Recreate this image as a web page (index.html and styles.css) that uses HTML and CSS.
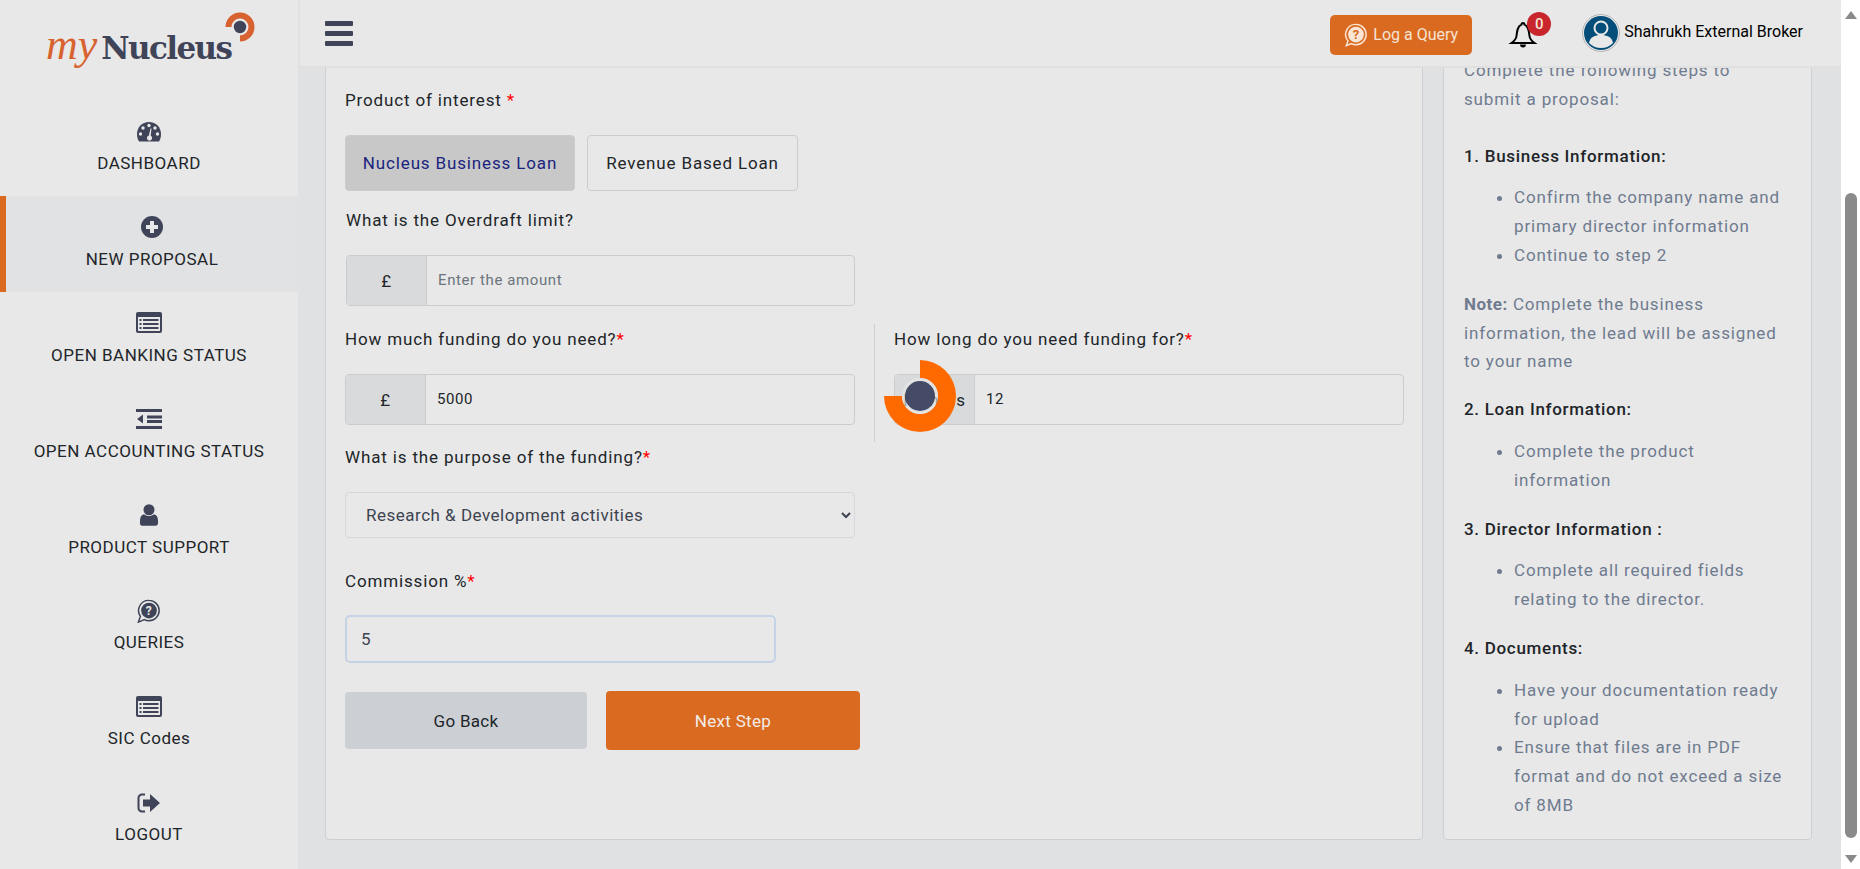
FILE: index.html
```html
<!DOCTYPE html>
<html lang="en">
<head>
<meta charset="utf-8">
<title>myNucleus - New Proposal</title>
<link rel="stylesheet" href="styles.css">
</head>
<body>
<div class="app">
  <aside class="sidebar">
    <div class="logo">
      <span class="logo-my">my</span><span class="logo-nucleus">Nucleus</span>
      <svg class="logo-mark" width="30" height="30" viewBox="0 0 30 30"><path d="M.5 15A14.500 14.500 0 1 1 15 29.500V23.500A8.500 8.500 0 1 0 6.500 15Z" fill="#d8622f"/><circle cx="15" cy="15" r="6.200" fill="#3f4458"/></svg>
    </div>
    <nav class="nav">
      <a class="nav-item">
        <svg class="nav-icon" width="26" height="22" viewBox="0 0 26 22"><path d="M13 1C6 1 1 6.500 1 13c0 3 .8 5.500 2 7.500h20c1.200-2 2-4.500 2-7.500C25 6.500 20 1 13 1Z" fill="#3f4458"/><g fill="#e8e8e8"><circle cx="13" cy="4.500" r="1.700"/><circle cx="7" cy="7" r="1.700"/><circle cx="19" cy="7" r="1.700"/><circle cx="4.500" cy="13" r="1.700"/><circle cx="21.500" cy="13" r="1.700"/><path d="M14.500 7.500h1l-.8 7.200a2.600 2.600 0 1 1-1.800-.2Z"/></g></svg>
        <span>DASHBOARD</span>
      </a>
      <a class="nav-item active">
        <svg class="nav-icon" width="22" height="22" viewBox="0 0 22 22"><circle cx="11" cy="11" r="11" fill="#3f4458"/><path d="M9 5h4v4h4v4h-4v4H9v-4H5V9h4Z" fill="#e8e8e8"/></svg>
        <span>NEW PROPOSAL</span>
      </a>
      <a class="nav-item">
        <svg class="nav-icon" width="26" height="22" viewBox="0 0 26 22"><use href="#listalt"/></svg>
        <span>OPEN BANKING STATUS</span>
      </a>
      <a class="nav-item">
        <svg class="nav-icon" width="26" height="22" viewBox="0 0 26 22"><path d="M0 1h26v3H0ZM11 7.500h15v3H11ZM11 12h15v3H11ZM0 18h26v3H0ZM1 11l6-4.500v9Z" fill="#3f4458"/></svg>
        <span>OPEN ACCOUNTING STATUS</span>
      </a>
      <a class="nav-item">
        <svg class="nav-icon" width="18" height="22" viewBox="0 0 18 22.500"><circle cx="9" cy="6" r="5.500" fill="#3f4458"/><path d="M4 10.500c1.300 1.200 3 1.800 5 1.800s3.700-.6 5-1.800c2.500.4 4 2.600 4 6.500v2.500c0 1.400-1 2.500-2.500 2.500h-13C1 22.500 0 21 0 19.500V17c0-3.900 1.500-6.100 4-6.500Z" fill="#3f4458"/></svg>
        <span>PRODUCT SUPPORT</span>
      </a>
      <a class="nav-item">
        <svg class="nav-icon" width="26" height="26" viewBox="0 0 26 26"><use href="#querybubble"/></svg>
        <span>QUERIES</span>
      </a>
      <a class="nav-item">
        <svg class="nav-icon" width="26" height="22" viewBox="0 0 26 22"><use href="#listalt"/></svg>
        <span>SIC Codes</span>
      </a>
      <a class="nav-item">
        <svg class="nav-icon" width="24" height="20" viewBox="0 0 24 20"><path d="M8 1.500H5A3.500 3.500 0 0 0 1.500 5v10A3.500 3.500 0 0 0 5 18.500h3" fill="none" stroke="#3f4458" stroke-width="2"/><path d="M6 6.500h7V1l10 9-10 9v-5.500H6Z" fill="#3f4458"/></svg>
        <span>LOGOUT</span>
      </a>
    </nav>
  </aside>

  <div class="main">
    <header class="topbar">
      <button class="burger" aria-label="Menu"><i></i><i></i><i></i></button>
      <div class="top-right">
        <button class="query-btn">
          <svg width="24" height="24" viewBox="0 0 26 26"><path d="M13 1.500a11 11 0 0 1 0 22c-2 0-3.500-.5-5-1.200L2.500 24.500l1.800-5A11 11 0 0 1 13 1.500Z" fill="none" stroke="#fbe6d6" stroke-width="1.600"/><circle cx="13" cy="12.500" r="8.500" fill="#fbe6d6"/><text x="13" y="17.500" class="query-mark">?</text></svg>
          <span>Log a Query</span>
        </button>
        <div class="bell">
          <svg width="30" height="30" viewBox="0 0 30 30"><path d="M15 3c-1 0-1.500.8-1.500 1.600C9.500 6 9 11 8.500 16c-.3 2.500-1.500 4.500-5 7h23c-3.500-2.500-4.700-4.500-5-7-.5-5-1-10-5-11.400C16.500 3.800 16 3 15 3Z" fill="none" stroke="#000" stroke-width="2"/><path d="M12 24.500a3 3 0 0 0 6 0Z" fill="#000"/></svg>
          <span class="badge">0</span>
        </div>
        <div class="user">
          <svg width="38" height="38" viewBox="0 0 38 38"><circle cx="19" cy="19" r="18.500" fill="#e8e8e8" stroke="#b5b5b5"/><circle cx="19" cy="19" r="17" fill="#054e7a"/><circle cx="19" cy="14" r="6.500" fill="none" stroke="#e8e8e8" stroke-width="2"/><path d="M7 29c1-6 6-8 12-8s11 2 12 8c-3 3-7 5-12 5S10 32 7 29Z" fill="#e8e8e8"/></svg>
          <span>Shahrukh External Broker</span>
        </div>
      </div>
    </header>

    <div class="content">
      <section class="card form-card">
        <div class="field-label first">Product of interest <em>*</em></div>
        <div class="choices">
          <button class="choice selected">Nucleus Business Loan</button>
          <button class="choice">Revenue Based Loan</button>
        </div>
        <div class="overdraft">
          <div class="field-label od">What is the Overdraft limit?</div>
          <div class="group half">
            <span class="addon">£</span>
            <input class="group-input" placeholder="Enter the amount">
          </div>
        </div>
        <div class="two-col">
          <div class="col">
            <div class="field-label">How much funding do you need?<em>*</em></div>
            <div class="group">
              <span class="addon">£</span>
              <input class="group-input" value="5000">
            </div>
          </div>
          <div class="col col-right">
            <div class="field-label">How long do you need funding for?<em>*</em></div>
            <div class="group">
              <span class="addon">Months</span>
              <input class="group-input" value="12">
            </div>
          </div>
        </div>
        <div class="field-label purpose">What is the purpose of the funding?<em>*</em></div>
        <select class="select">
          <option>Research &amp; Development activities</option>
        </select>
        <div class="field-label commission">Commission %<em>*</em></div>
        <input class="plain-input" value="5">
        <div class="actions">
          <button class="btn-back">Go Back</button>
          <button class="btn-next">Next Step</button>
        </div>
      </section>

      <aside class="card help-card">
        <p class="intro">Complete the following steps to submit a proposal:</p>
        <h6>1. Business Information:</h6>
        <ul>
          <li>Confirm the company name and primary director information</li>
          <li>Continue to step 2</li>
        </ul>
        <p><b>Note:</b> Complete the business information, the lead will be assigned to your name</p>
        <h6>2. Loan Information:</h6>
        <ul>
          <li>Complete the product information</li>
        </ul>
        <h6>3. Director Information :</h6>
        <ul>
          <li>Complete all required fields relating to the director.</li>
        </ul>
        <h6>4. Documents:</h6>
        <ul>
          <li>Have your documentation ready for upload</li>
          <li>Ensure that files are in PDF format and do not exceed a size of 8MB</li>
        </ul>
      </aside>
    </div>
  </div>

  <div class="scrollbar">
    <span class="arrow up"></span>
    <span class="thumb"></span>
    <span class="arrow down"></span>
  </div>
</div>

<svg class="spinner" width="72" height="72" viewBox="0 0 72 72"><path d="M36 0A36 36 0 1 1 0 36H18A18 18 0 1 0 36 18Z" fill="#ff6a00"/><circle cx="36" cy="36" r="16.500" fill="none" stroke="#e8e8e8" stroke-width="3" stroke-opacity=".65"/><circle cx="36" cy="36" r="15" fill="#454b66"/></svg>

<svg class="defs" width="0" height="0">
  <defs>
    <g id="listalt"><rect x="0" y="0" width="26" height="21" rx="2" fill="#3f4458"/><rect x="2" y="5" width="22" height="14" fill="#e8e8e8"/><path d="M3.500 7h2v2h-2ZM7 7h15.500v2H7ZM3.500 11h2v2h-2ZM7 11h15.500v2H7ZM3.500 15h2v2h-2ZM7 15h15.500v2H7Z" fill="#3f4458"/></g>
    <g id="querybubble"><path d="M13 1.500a11 11 0 0 1 0 22c-2 0-3.500-.5-5-1.200L1.500 25l2.200-6.200A11 11 0 0 1 13 1.500Z" fill="none" stroke="#3f4458" stroke-width="1.600"/><circle cx="13" cy="12.500" r="8.500" fill="#3f4458"/><text x="13" y="17" class="nav-query-mark">?</text></g>
  </defs>
</svg>
</body>
</html>
```

FILE: styles.css
```css
* { box-sizing: border-box; }
html, body { margin: 0; padding: 0; height: 100%; overflow: hidden; }
body { font-family: Roboto, "Liberation Sans", sans-serif; font-size: 17px; color: #212529; background: #e0e1e3; }
button { font-family: inherit; }

.app { display: flex; height: 869px; width: 1860px; }

.sidebar { width: 300px; flex: none; background: #e8e8e8; border-right: 2px solid #e0e1e3; }
.logo { height: 100px; position: relative; padding: 25px 0 0 46px; display: flex; align-items: baseline; white-space: nowrap; }
.logo-my { font-family: "Liberation Serif", serif; font-style: italic; font-size: 44px; color: #d8622f; line-height: 40px; margin-right: 4px; }
.logo-nucleus { font-family: "DejaVu Serif", serif; font-weight: 700; font-size: 31px; letter-spacing: -1.600px; color: #3f4458; line-height: 40px; }
.logo-mark { position: absolute; left: 225px; top: 12px; }

.nav-item { height: 95.900px; display: flex; flex-direction: column; align-items: center; padding-top: 19.500px; letter-spacing: .5px; color: #212529; }
.nav-item .nav-icon { height: 24px; margin-bottom: 9.500px; flex: none; }
.nav-item.active { background: #e1e2e4; border-left: 6px solid #da6a20; }

.main { flex: 1; min-width: 0; display: flex; flex-direction: column; }
.topbar { height: 68px; flex: none; display: flex; align-items: center; justify-content: space-between; padding: 0 38px 0 25px; background: #e8e8e8; border-bottom: 2px solid #e0e0e0; position: relative; z-index: 2; }
.burger { width: 28px; height: 25px; padding: 0; border: 0; background: none; display: flex; flex-direction: column; justify-content: space-between; }
.burger i { display: block; height: 5px; border-radius: 1px; background: #3f4458; }
.top-right { display: flex; align-items: center; padding-top: 3px; }
.query-btn { width: 142px; height: 40px; margin-right: 36px; display: flex; align-items: center; justify-content: center; gap: 5px; border: 0; border-radius: 5px; background: #da6a20; color: #f5e3d3; font-size: 16px; }
.query-mark { font: 700 14px Roboto, sans-serif; fill: #da6a20; text-anchor: middle; }
.nav-query-mark { font: 700 13px Roboto, sans-serif; fill: #e8e8e8; text-anchor: middle; }
.bell { position: relative; width: 30px; height: 30px; margin-right: 44px; }
.badge { position: absolute; left: 19px; top: -8px; width: 24px; height: 24px; border-radius: 50%; background: #c9252d; color: #f5e3d3; font-size: 15px; font-weight: 500; text-align: center; line-height: 24px; }
.user { display: flex; align-items: center; gap: 4px; font-size: 16px; color: #000; margin-top: -4px; }
.user span { margin-top: -2px; }

.content { flex: 1; min-height: 0; overflow: hidden; display: flex; align-items: flex-start; padding: 0 29px 0 25px; gap: 20px; }
.card { background: #e8e8e8; border: 1px solid #ccd0d5; border-radius: 4px; margin-top: -30px; height: 802px; }
.form-card { width: 1098px; flex: none; padding: 49px 19px 0; }
.help-card { flex: 1; padding: 17px 28px 0 20px; color: #6f7b8f; line-height: 28.800px; overflow: hidden; }

.field-label { line-height: 24px; letter-spacing: .85px; color: #212529; }
.field-label em { font-style: normal; color: #f00; }
.choices { display: flex; gap: 12px; margin-top: 23px; }
.choice { height: 56px; padding: 0 10px; border: 1px solid #ccc; border-radius: 4px; background: transparent; font-size: 17px; letter-spacing: .85px; color: #212529; }
.choice.selected { background: #c8c8c8; color: #1a237e; width: 230px; }
.choice:not(.selected) { width: 211px; }

.overdraft { border-left: 1px solid #ccd0d5; margin-left: -20px; padding-left: 20px; }
.field-label.od { padding-top: 17px; }
.group { display: flex; height: 51px; border: 1px solid #ccc; border-radius: 4px; margin-top: 23px; overflow: hidden; }
.group.half { width: 509px; }
.addon { width: 80px; flex: none; display: flex; align-items: center; justify-content: center; background: #d9dadc; border-right: 1px solid #ccc; font-size: 17px; letter-spacing: .85px; }
.group-input { flex: 1; min-width: 0; border: 0; background: transparent; padding: 0 11px 2px; font: 15px Roboto, sans-serif; color: #212529; letter-spacing: .6px; outline: 0; }
.group-input::placeholder { color: #6c757d; }

.two-col { display: grid; grid-template-columns: 529px 530px; margin-top: 18px; height: 118px; }
.col { min-width: 0; padding-top: 3px; }
.col-right { border-left: 1px solid #ccd0d5; padding-left: 19px; }
.col:first-child .group { width: 510px; }
.col-right .group { width: 510px; }

.purpose { margin-top: 3px; }
.select { display: block; width: 510px; height: 46px; margin-top: 23px; padding: 0 16px; border: 1px solid #d5d7da; border-radius: 4px; background: transparent; font: 17px Roboto, sans-serif; letter-spacing: .5px; color: #3d4450; }
.commission { margin-top: 31px; }
.plain-input { display: block; width: 431px; height: 48px; margin-top: 22px; padding: 0 14px; border: 2px solid #c5d3e6; border-radius: 5px; background: transparent; font: 17px Roboto, sans-serif; color: #3d4450; outline: 0; }
.actions { display: flex; align-items: center; gap: 19px; margin-top: 28px; }
.btn-back { width: 242px; height: 57px; border: 0; border-radius: 4px; background: #ccd0d5; color: #212529; font-size: 17px; letter-spacing: .3px; }
.btn-next { width: 254px; height: 59px; border: 0; border-radius: 4px; background: #da6a20; color: #f2ece7; font-size: 17px; letter-spacing: .3px; }

.help-card p { margin: 0 0 19px; letter-spacing: .85px; }
.help-card p.intro { margin-bottom: 28px; }
.help-card h6 { margin: 0 0 13px; font-size: 17px; font-weight: 500; color: #212529; line-height: 28.800px; letter-spacing: .7px; }
.help-card ul { margin: 0 0 20px; padding-left: 50px; letter-spacing: .85px; }
.help-card b { font-weight: 700; letter-spacing: .5px; }

.scrollbar { width: 19px; flex: none; background: #fff; position: relative; display: flex; flex-direction: column; align-items: center; height: 869px; }
.thumb { position: absolute; top: 193px; left: 4px; width: 12px; height: 645px; border-radius: 6px; background: #8a8a8a; }
.arrow { position: absolute; left: 4px; width: 0; height: 0; border-left: 6px solid transparent; border-right: 6px solid transparent; }
.arrow.up { top: 11px; border-bottom: 8px solid #8a8a8a; }
.arrow.down { bottom: 6px; border-top: 8px solid #8a8a8a; }

.spinner { position: absolute; left: 884px; top: 360px; z-index: 5; }
.defs { position: absolute; }
```
